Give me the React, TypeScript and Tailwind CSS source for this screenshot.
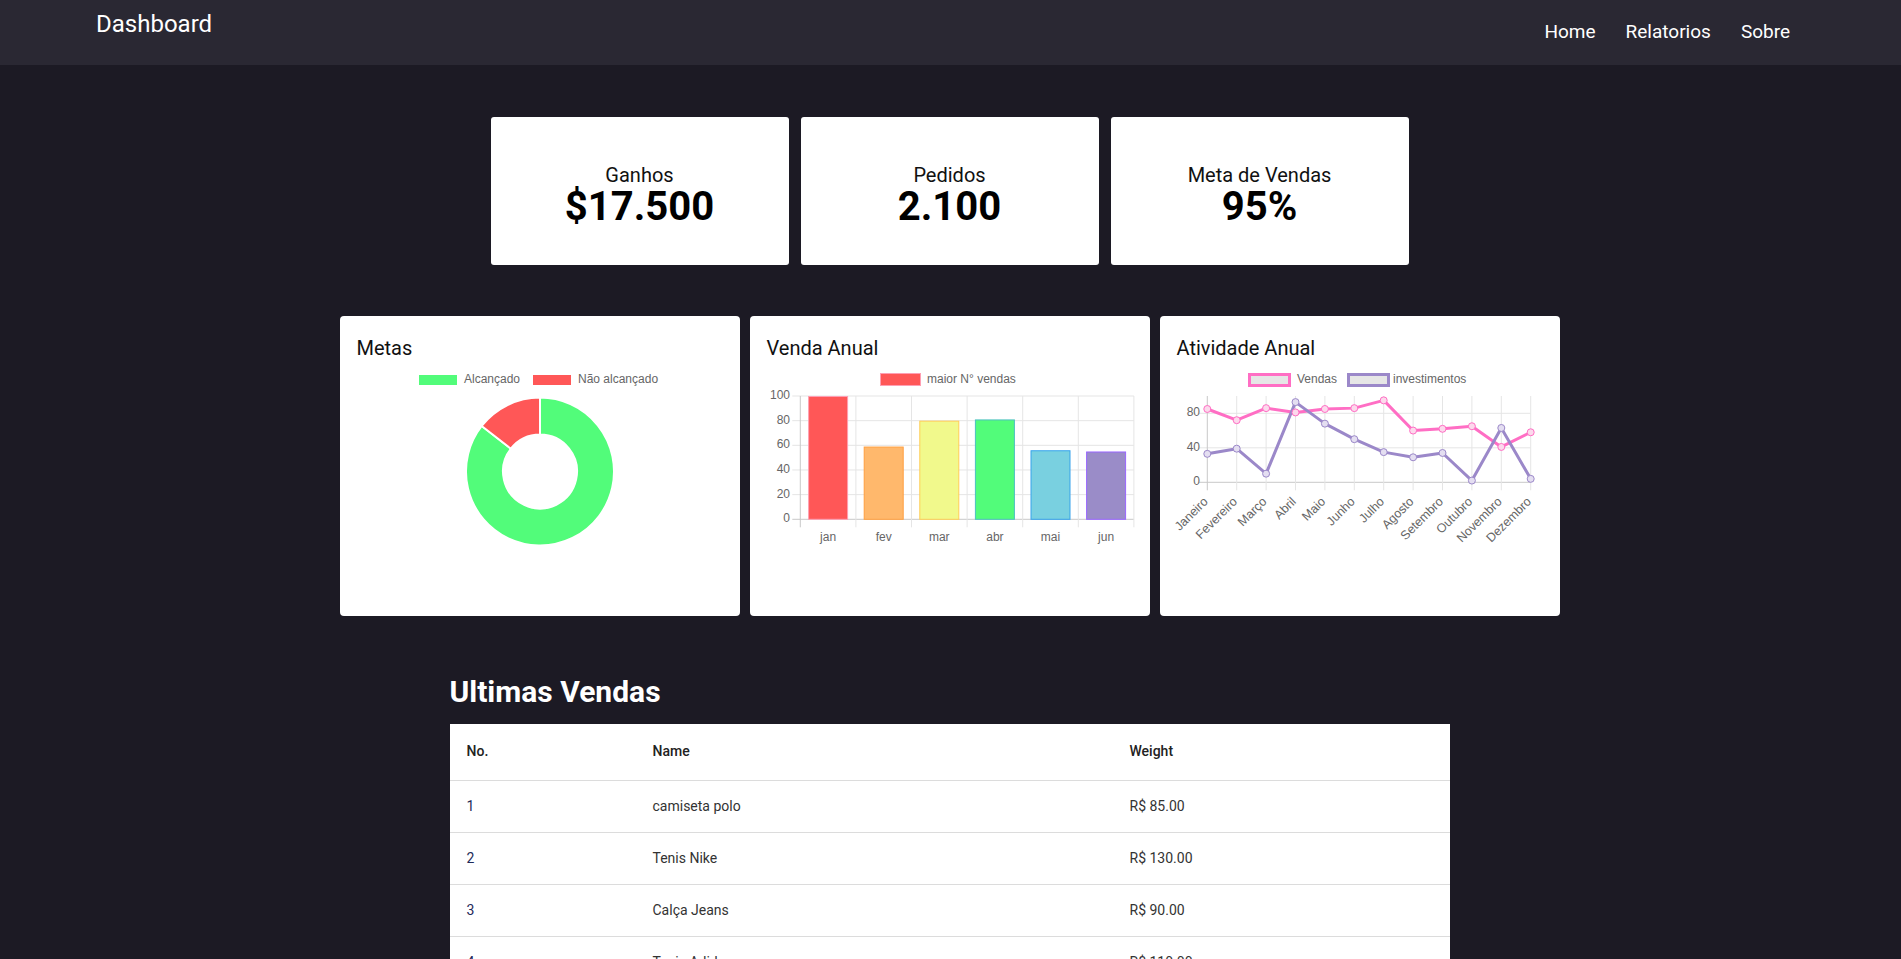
import React from "react";

const stats = [
  { label: "Ganhos", value: "$17.500" },
  { label: "Pedidos", value: "2.100" },
  { label: "Meta de Vendas", value: "95%" }
];

const sales = [
  { id: 1, name: "camiseta polo", price: "R$ 85.00" },
  { id: 2, name: "Tenis Nike", price: "R$ 130.00" },
  { id: 3, name: "Calça Jeans", price: "R$ 90.00" },
  { id: 4, name: "Tenis Adidas", price: "R$ 110.00" }
];

const chartFont = "'Liberation Sans', Arial, sans-serif";
const GRID = "#e5e5e5";
const AXIS = "#c8c8c8";
const LABEL = "#666";

function point(cx: number, cy: number, r: number, deg: number) {
  const a = (deg * Math.PI) / 180;
  return [cx + r * Math.sin(a), cy - r * Math.cos(a)];
}

function ringSlice(cx: number, cy: number, ro: number, ri: number, from: number, to: number) {
  const [x1, y1] = point(cx, cy, ro, from);
  const [x2, y2] = point(cx, cy, ro, to);
  const [x3, y3] = point(cx, cy, ri, to);
  const [x4, y4] = point(cx, cy, ri, from);
  const large = to - from > 180 ? 1 : 0;
  return `M${x1} ${y1} A${ro} ${ro} 0 ${large} 1 ${x2} ${y2} L${x3} ${y3} A${ri} ${ri} 0 ${large} 0 ${x4} ${y4} Z`;
}

function DoughnutChart() {
  const cx = 183;
  const cy = 111.5;
  return (
    <svg width="366" height="240" className="overflow-visible" style={{ fontFamily: chartFont }}>
      <rect x="61" y="14" width="40" height="12" fill="#52fc7a" stroke="#fff" strokeWidth="2" />
      <text x="107" y="20" fontSize="12" fill={LABEL} dominantBaseline="middle">Alcançado</text>
      <rect x="175" y="14" width="40" height="12" fill="#ff5757" stroke="#fff" strokeWidth="2" />
      <text x="221" y="20" fontSize="12" fill={LABEL} dominantBaseline="middle">Não alcançado</text>
      <path d={ringSlice(cx, cy, 74, 37, 0, 308)} fill="#52fc7a" stroke="#fff" strokeWidth="2" />
      <path d={ringSlice(cx, cy, 74, 37, 308, 360)} fill="#ff5757" stroke="#fff" strokeWidth="2" />
    </svg>
  );
}

const bars = [
  { m: "jan", v: 100, fill: "#ff5757", stroke: "#ff9fb3" },
  { m: "fev", v: 59, fill: "#ffb86c", stroke: "#ff9f40" },
  { m: "mar", v: 80, fill: "#f1f98c", stroke: "#ffcd56" },
  { m: "abr", v: 81, fill: "#52fc7a", stroke: "#4bc0c0" },
  { m: "mai", v: 56, fill: "#79d0e0", stroke: "#36a2eb" },
  { m: "jun", v: 55, fill: "#9a8cc8", stroke: "#9966ff" }
];

function BarChart() {
  const left = 33.3;
  const step = 55.6;
  const y0 = 159.3;
  const k = 1.233;
  return (
    <svg width="383" height="240" className="overflow-visible" style={{ fontFamily: chartFont }}>
      <rect x="113.5" y="13.5" width="40" height="12" fill="#ff5757" stroke="#ff9fb3" strokeWidth="1" />
      <text x="160" y="20" fontSize="12" fill={LABEL} dominantBaseline="middle">maior N° vendas</text>
      {[0, 20, 40, 60, 80, 100].map((t) => {
        const y = y0 - t * k;
        return (
          <g key={t}>
            <line x1={left - 8} x2={left + step * 6} y1={y} y2={y} stroke={t === 0 ? AXIS : GRID} />
            <text x="23" y={y} fontSize="12" fill={LABEL} textAnchor="end" dominantBaseline="middle">{t}</text>
          </g>
        );
      })}
      {[0, 1, 2, 3, 4, 5, 6].map((i) => (
        <line key={i} x1={left + i * step} x2={left + i * step} y1={36} y2={y0 + 8} stroke={i === 0 ? AXIS : GRID} />
      ))}
      {bars.map((b, i) => {
        const cx = left + step * i + step / 2;
        const h = b.v * k;
        return (
          <g key={b.m}>
            <rect x={cx - 20 + 0.5} y={y0 - h + 0.5} width="39" height={h - 0.5} fill={b.fill} stroke={b.stroke} strokeWidth="1" />
            <text x={cx} y="178" fontSize="12" fill={LABEL} textAnchor="middle" dominantBaseline="middle">{b.m}</text>
          </g>
        );
      })}
    </svg>
  );
}

const months = ["Janeiro", "Fevereiro", "Março", "Abril", "Maio", "Junho", "Julho", "Agosto", "Setembro", "Outubro", "Novembro", "Dezembro"];
const vendas = [85, 72, 86, 81, 85, 86, 95, 60, 62, 65, 41, 58];
const invest = [33, 39, 10, 93, 68, 50, 35, 29, 34, 2, 63, 4];

function LineChart() {
  const left = 30.3;
  const step = 29.4;
  const y0 = 122.3;
  const k = 0.8625;
  const xs = months.map((_, i) => left + i * step);
  const line = (d: number[]) => d.map((v, i) => `${i ? "L" : "M"}${xs[i]} ${y0 - v * k}`).join(" ");
  return (
    <svg width="383" height="240" className="overflow-visible" style={{ fontFamily: chartFont }}>
      <rect x="72.5" y="14.5" width="40" height="11" fill="#e6e6e6" stroke="#ff6ec4" strokeWidth="3" />
      <text x="120" y="20" fontSize="12" fill={LABEL} dominantBaseline="middle">Vendas</text>
      <rect x="171.5" y="14.5" width="40" height="11" fill="#e6e6e6" stroke="#9b88c9" strokeWidth="3" />
      <text x="216" y="20" fontSize="12" fill={LABEL} dominantBaseline="middle">investimentos</text>
      {[0, 40, 80].map((t) => {
        const y = y0 - t * k;
        return (
          <g key={t}>
            <line x1={left - 8} x2={xs[11]} y1={y} y2={y} stroke={t === 0 ? AXIS : GRID} />
            <text x="23" y={y} fontSize="12" fill={LABEL} textAnchor="end" dominantBaseline="middle">{t}</text>
          </g>
        );
      })}
      {xs.map((x, i) => (
        <line key={i} x1={x} x2={x} y1={36} y2={y0 + 8} stroke={i === 0 ? AXIS : GRID} />
      ))}
      <path d={line(vendas)} fill="none" stroke="#ff6ec4" strokeWidth="3" strokeLinejoin="round" />
      <path d={line(invest)} fill="none" stroke="#9b88c9" strokeWidth="3" strokeLinejoin="round" />
      {vendas.map((v, i) => (
        <circle key={`v${i}`} cx={xs[i]} cy={y0 - v * k} r="3.5" fill="#fcd9ec" stroke="#ff6ec4" strokeWidth="1" />
      ))}
      {invest.map((v, i) => (
        <circle key={`i${i}`} cx={xs[i]} cy={y0 - v * k} r="3.5" fill="#e4def1" stroke="#9b88c9" strokeWidth="1" />
      ))}
      {months.map((m, i) => (
        <text
          key={m}
          x={xs[i] - 1}
          y={140}
          fontSize="12.5"
          fill={LABEL}
          textAnchor="end"
          dominantBaseline="middle"
          transform={`rotate(-45 ${xs[i] - 1} 140)`}
        >
          {m}
        </text>
      ))}
    </svg>
  );
}

function ChartCard({ title, children }: { title: string; children: React.ReactNode }) {
  return (
    <div className="h-[300px] w-[400px] overflow-hidden rounded-[4px] bg-white px-[17px] pt-[20px]">
      <h3 className="text-[20px] leading-[24px] font-normal text-[#111]">{title}</h3>
      {children}
    </div>
  );
}

export default function App() {
  return (
    <div className="min-h-screen bg-[#1c1a24] font-['Roboto',sans-serif] pb-10">
      <header className="flex h-[65px] items-start justify-between bg-[#2a2833] px-[96px]">
        <a className="mt-[10px] text-[24px] leading-[29px] text-white">Dashboard</a>
        <nav className="mt-[21px] flex">
          {["Home", "Relatorios", "Sobre"].map((l) => (
            <a key={l} className="px-[15px] text-[19px] leading-[22px] text-white">
              {l}
            </a>
          ))}
        </nav>
      </header>

      <section className="mt-[52px] flex justify-center gap-[12px] pr-[2px]">
        {stats.map((s) => (
          <div key={s.label} className="flex h-[148px] w-[298px] flex-col items-center rounded-[3px] bg-white pt-[46px]">
            <span className="text-[20px] leading-[24px] text-[#111]">{s.label}</span>
            <span className="text-[40px] leading-[40px] font-bold text-black">{s.value}</span>
          </div>
        ))}
      </section>

      <section className="mt-[51px] flex justify-center gap-[10px] pr-[2px]">
        <ChartCard title="Metas">
          <DoughnutChart />
        </ChartCard>
        <ChartCard title="Venda Anual">
          <BarChart />
        </ChartCard>
        <ChartCard title="Atividade Anual">
          <LineChart />
        </ChartCard>
      </section>

      <div className="mt-[58px] pr-[2px]">
        <section className="mx-auto w-[1000px]">
          <h2 className="text-[30px] leading-[36px] font-bold text-white">Ultimas Vendas</h2>
          <table className="mt-[14px] w-full table-fixed bg-white text-left text-[14px] text-[#333]">
            <colgroup>
              <col className="w-[186px]" />
              <col className="w-[477px]" />
              <col />
            </colgroup>
            <thead>
              <tr className="h-[56px] border-b border-[#dcdcdc]">
                <th className="pl-[17px] font-medium text-[#222]">No.</th>
                <th className="pl-[17px] font-medium text-[#222]">Name</th>
                <th className="pl-[17px] font-medium text-[#222]">Weight</th>
              </tr>
            </thead>
            <tbody>
              {sales.map((s) => (
                <tr key={s.id} className="h-[52px] border-b border-[#dcdcdc]">
                  <td className="pl-[17px] text-[#1f2a5a]">{s.id}</td>
                  <td className="pl-[17px]">{s.name}</td>
                  <td className="pl-[17px]">{s.price}</td>
                </tr>
              ))}
            </tbody>
          </table>
        </section>
      </div>
    </div>
  );
}
